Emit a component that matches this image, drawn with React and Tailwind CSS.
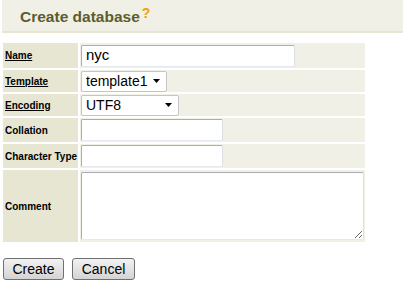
import React from "react";

const inputCls =
  "h-[22px] bg-white border border-[#abadb3] border-b-[#e3e9ef] border-r-[#dbdfe6] rounded-[2px] px-[4px] text-[15px] text-black outline-none";

const Select = ({ value, width }) => (
  <div
    className={`${width} h-[21px] bg-white border border-[#c5c5c5] rounded-[2px] flex items-center justify-between pl-[4px] pr-[6px]`}
  >
    <span className="text-[14px] leading-none text-black">{value}</span>
    <svg width="7" height="4" viewBox="0 0 7 4">
      <path d="M0 0h7L3.5 4z" fill="#000" />
    </svg>
  </div>
);

const Row = ({ label, link, height = "h-[24px]", children }) => (
  <div className={`flex gap-[2px] ${height}`}>
    <div className="w-[75px] bg-[#e6e6d2] flex items-center pl-[2px]">
      <span
        className={`text-[10px] font-bold text-black whitespace-nowrap ${
          link ? "underline" : ""
        }`}
      >
        {label}
      </span>
    </div>
    <div className="w-[285px] bg-[#f0f0e7] flex items-center pl-[1px]">
      {children}
    </div>
  </div>
);

export default function App() {
  return (
    <div
      className="w-[405px] h-[285px] bg-white pt-0"
      style={{ fontFamily: "'Liberation Sans', Arial, sans-serif" }}
    >
      <div className="mx-[2px] h-[33px] bg-[#f1f0e7] border-b-[2px] border-[#e6e6d2] flex items-center pl-[18px]">
        <h1 className="text-[15.5px] font-bold text-[#5c5c2e] mt-[3px]">
          Create database
        </h1>
        <span className="text-[14px] font-bold text-[#f5a000] self-start mt-[3px] ml-[2px]">
          ?
        </span>
      </div>

      <div className="mt-[10px] ml-[3px] flex flex-col gap-[2px]">
        <Row label="Name" link height="h-[25px]">
          <input className={`${inputCls} w-[214px]`} defaultValue="nyc" />
        </Row>
        <Row label="Template" link height="h-[22px]">
          <Select value="template1" width="w-[86px]" />
        </Row>
        <Row label="Encoding" link height="h-[22px]">
          <Select value="UTF8" width="w-[98px]" />
        </Row>
        <Row label="Collation">
          <input className={`${inputCls} w-[142px]`} />
        </Row>
        <Row label="Character Type">
          <input className={`${inputCls} w-[142px]`} />
        </Row>
        <Row label="Comment" height="h-[72px]">
          <textarea className="w-[283px] h-[68px] bg-white border border-[#abadb3] border-b-[#e3e9ef] border-r-[#dbdfe6] rounded-[2px] outline-none" />
        </Row>
      </div>

      <div className="mt-[16px] ml-[3px] flex gap-[8px]">
        <button className="w-[61px] h-[22px] rounded-[3px] border border-[#707070] bg-gradient-to-b from-[#f2f2f2] to-[#d4d4d4] text-[14px] text-black">
          Create
        </button>
        <button className="w-[63px] h-[22px] rounded-[3px] border border-[#707070] bg-gradient-to-b from-[#f2f2f2] to-[#d4d4d4] text-[14px] text-black">
          Cancel
        </button>
      </div>
    </div>
  );
}
